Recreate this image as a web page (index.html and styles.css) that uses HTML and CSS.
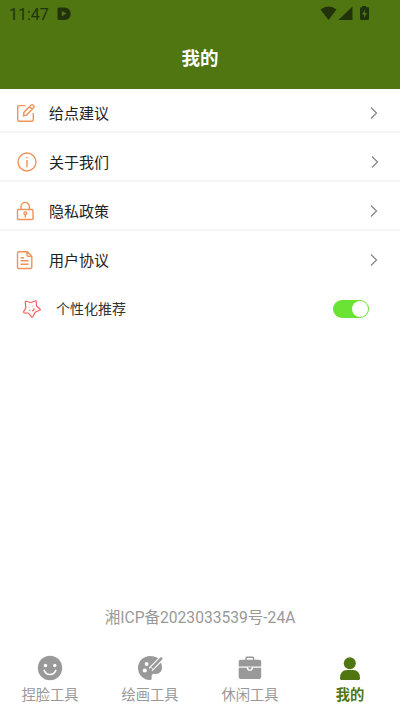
FILE: index.html
```html
<!DOCTYPE html>
<html lang="zh-CN">
<head>
  <meta charset="UTF-8">
  <meta name="viewport" content="width=device-width, initial-scale=1.0">
  <title>我的</title>
  <link rel="stylesheet" href="styles.css">
</head>
<body>
  <header class="header">
    <div class="status-bar">
      <span class="time">11:47</span>
      <svg class="app-icon" width="14" height="14" viewBox="0 0 14 14">
        <path fill-rule="evenodd" d="M2 .5h5.500a6.300 6.300 0 0 1 0 12.600H2A1.500 1.500 0 0 1 .5 11.600V2A1.500 1.500 0 0 1 2 .5zM4.800 4v5.200l4.700-2.600z"/>
      </svg>
      <div class="status-right">
        <svg width="50" height="16" viewBox="0 0 50 16">
          <path d="M.5 3.500Q8.500-2.500 16.500 3.500L8.500 14z"/>
          <path d="M32.500.5V14H18.500z"/>
          <path fill-rule="evenodd" d="M42-.3h4v1.500h2q1 0 1 1V13q0 1-1 1h-7q-1 0-1-1V2.200q0-1 1-1h1zM44.800 3.800L42 8.500h2v3.300l3-4.700h-2.200z"/>
        </svg>
      </div>
    </div>
    <h1>我的</h1>
  </header>

  <main>
    <ul class="menu">
      <li class="menu-item">
        <svg class="icon" width="20" height="20" viewBox="0 0 20 20">
          <path d="M9.500 2.600H3.200q-1.500 0-1.500 1.500v12.600q0 1.500 1.500 1.500h12.600q1.500 0 1.500-1.500V10"/>
          <path d="M7.400 12.800l.5-3.400L15.200 2q.8-.7 1.600 0l1 1q.7.800 0 1.600l-7.300 7.500zM13.600 3.800l2.500 2.500"/>
        </svg>
        <span>给点建议</span>
        <svg class="arrow" width="8" height="14" viewBox="0 0 8 14"><path d="M1 1.500L6.500 7 1 12.500"/></svg>
      </li>
      <li class="menu-item">
        <svg class="icon icon-info" width="20" height="20" viewBox="0 0 20 20">
          <circle cx="10" cy="10" r="9"/>
          <path d="M10 8v7.200M10 4.800v1.500"/>
        </svg>
        <span>关于我们</span>
        <svg class="arrow arrow-info" width="8" height="14" viewBox="0 0 8 14"><path d="M1 1.500L6.500 7 1 12.500"/></svg>
      </li>
      <li class="menu-item">
        <svg class="icon" width="20" height="20" viewBox="0 0 20 20">
          <rect x="1.500" y="8.500" width="15.500" height="10" rx="1"/>
          <path d="M5 8.500V5.600a4.200 4.200 0 0 1 8.400 0v2.900M9.300 13.600v3"/>
          <circle cx="9.300" cy="12.300" r="1.400"/>
        </svg>
        <span>隐私政策</span>
        <svg class="arrow" width="8" height="14" viewBox="0 0 8 14"><path d="M1 1.500L6.500 7 1 12.500"/></svg>
      </li>
      <li class="menu-item">
        <svg class="icon" width="20" height="20" viewBox="0 0 20 20">
          <path d="M2.800 1.700h8.400l4.600 4.600v10.900q0 1.300-1.300 1.300H2.800q-1.300 0-1.300-1.300V3q0-1.300 1.300-1.300zM11 1.700v3.600q0 1.100 1.100 1.100h3.700M4.500 7.800h3.500M4.500 10.800h8M4.500 14.200h8"/>
        </svg>
        <span>用户协议</span>
        <svg class="arrow" width="8" height="14" viewBox="0 0 8 14"><path d="M1 1.500L6.500 7 1 12.500"/></svg>
      </li>
    </ul>

    <div class="recommend">
      <svg class="star" width="18" height="18" viewBox="0 0 18 18">
        <path d="M3.300 1.200L8 2.700 12.300.8q1-.2 1 .8l.2 4.300 3.600 3.300q.5.700-.3 1.100l-4.700 2-2.200 4.500q-.6.800-1.300.1L5.600 13.200l-4.300-.4q-1-.3-.6-1.200l2.200-3.800L2.300 2.200q0-1 1-1z"/>
        <path d="M6 7.500v.6M9.800 5.800v.8M6.300 10.300l1 .2M11 8.200q.3 2.400-2 2.500"/>
      </svg>
      <span>个性化推荐</span>
      <div class="switch"></div>
    </div>
  </main>

  <p class="icp">湘ICP备2023033539号-24A</p>

  <nav class="tab-bar">
    <div class="tab">
      <svg width="26" height="26" viewBox="0 0 26 26">
        <circle cx="13" cy="13" r="12.200"/>
        <circle class="hole" cx="8.500" cy="10.500" r="1.700"/>
        <circle class="hole" cx="17.800" cy="10.500" r="1.700"/>
        <path class="cut" d="M7.200 15.500q1.800 4 5.800 4t5.800-4"/>
      </svg>
      <span>捏脸工具</span>
    </div>
    <div class="tab">
      <svg width="26" height="26" viewBox="0 0 26 26">
        <path d="M13 1a12 12 0 1 0 0 24q2.200 0 1.600-2.500-.5-4 3.400-3.600 7 .3 7-6.500Q24 1 13 1z"/>
        <circle class="hole" cx="9.600" cy="9" r="1.900"/>
        <circle class="hole" cx="7.800" cy="15.500" r="2.100"/>
        <path class="brush-gap" d="M25.500 2.500L13.500 14.500"/>
        <path d="M23.300 2.600q1-.8 1.800 0t0 1.800L16 14l-1.900-1.900z"/>
        <path d="M13.900 12.400l1.800 1.800q-.8 1.800-3.900 1.500 1.200-.5 1-1.800.1-1.200 1.100-1.500z"/>
      </svg>
      <span>绘画工具</span>
    </div>
    <div class="tab">
      <svg width="26" height="26" viewBox="0 0 26 26">
        <path class="handle" d="M9 5.500V3.200q0-.9.900-.9h5.800q.9 0 .9.900v2.300"/>
        <path d="M3.700 4.700h18.500q2 0 2 2v4.700H1.700V6.700q0-2 2-2z"/>
        <path d="M1.700 12.700h8.100a3 3 0 0 0 6.200 0h8.200v9.200q0 2-2 2H3.700q-2 0-2-2z"/>
        <path d="M11.300 12.200h3.200v.8a1.600 1.600 0 0 1-3.200 0z"/>
      </svg>
      <span>休闲工具</span>
    </div>
    <div class="tab active">
      <svg width="26" height="26" viewBox="0 0 26 26">
        <circle cx="12.800" cy="8.200" r="6"/>
        <path d="M3 23.500Q3 15 10 15h6q7 0 7 8.500 0 1.500-1.500 1.500h-17Q3 25 3 23.500z"/>
      </svg>
      <span>我的</span>
    </div>
  </nav>
</body>
</html>
```
FILE: styles.css
```css
* {
  box-sizing: border-box;
}

body {
  margin: 0;
  height: 711px;
  display: flex;
  flex-direction: column;
  overflow: hidden;
  background: #fff;
  font-family: Roboto, "Noto Sans CJK SC", sans-serif;
  color: #222;
}

svg {
  flex-shrink: 0;
}

.header {
  height: 89px;
  background: #507612;
}

.status-bar {
  display: flex;
  align-items: center;
  height: 28px;
  padding: 0 30px 0 9px;
  color: #21330a;
  fill: #21330a;
}

.time {
  width: 48px;
  font-size: 16px;
}

.status-right {
  display: flex;
  margin-left: auto;
}

.header h1 {
  margin: 17px 0 0;
  font-size: 18.5px;
  font-weight: 700;
  line-height: 28px;
  text-align: center;
  color: #fff;
}

.menu {
  margin: 0;
  padding: 0;
  list-style: none;
}

.menu-item {
  display: flex;
  align-items: center;
  height: 49px;
  padding: 10px 22px 0 16px;
  border-bottom: 2px solid #f5f5f5;
  font-size: 15px;
}

.menu-item span {
  margin-top: 2px;
  line-height: 20px;
}

.menu-item:first-child {
  height: 44px;
  padding-top: 6px;
}

.menu-item:last-child {
  border-bottom-color: transparent;
}

.icon {
  margin-right: 13px;
  fill: none;
  stroke: #f0935a;
  stroke-width: 1.4;
}

.icon-info {
  margin: 0 12px 0 1px;
}

.arrow {
  margin-left: auto;
  fill: none;
  stroke: #888;
  stroke-width: 1.3;
}

.arrow-info {
  margin-right: -1px;
}

.recommend {
  display: flex;
  align-items: center;
  height: 56px;
  padding: 2px 31px 0 23px;
  font-size: 14px;
  line-height: 20px;
  color: #333;
}

.star {
  margin-right: 15px;
  fill: none;
  stroke: #f86060;
  stroke-width: 1.2;
}

.switch {
  width: 36px;
  height: 18px;
  margin-left: auto;
  padding: 1px;
  border-radius: 9px;
  background: #6be334;
}

.switch::after {
  content: "";
  display: block;
  width: 16px;
  height: 16px;
  margin-left: auto;
  border-radius: 50%;
  background: #fff;
}

.icp {
  margin: auto 0 23px;
  font-size: 15.6px;
  line-height: 20px;
  text-align: center;
  color: #999;
}

.tab-bar {
  display: flex;
  height: 60px;
}

.tab {
  flex: 1;
  display: flex;
  flex-direction: column;
  align-items: center;
  padding-top: 4px;
  font-size: 14.3px;
  line-height: 20px;
  color: #999;
  fill: #999;
}

.tab span {
  margin-top: 4px;
}

.tab.active {
  color: #507612;
  fill: #507612;
  font-weight: 700;
}

.hole {
  fill: #fff;
}

.cut {
  fill: none;
  stroke: #fff;
  stroke-width: 1.7;
  stroke-linecap: round;
}

.brush-gap {
  stroke: #fff;
  stroke-width: 5;
}

.handle {
  fill: none;
  stroke: #999;
  stroke-width: 1.5;
}
```
